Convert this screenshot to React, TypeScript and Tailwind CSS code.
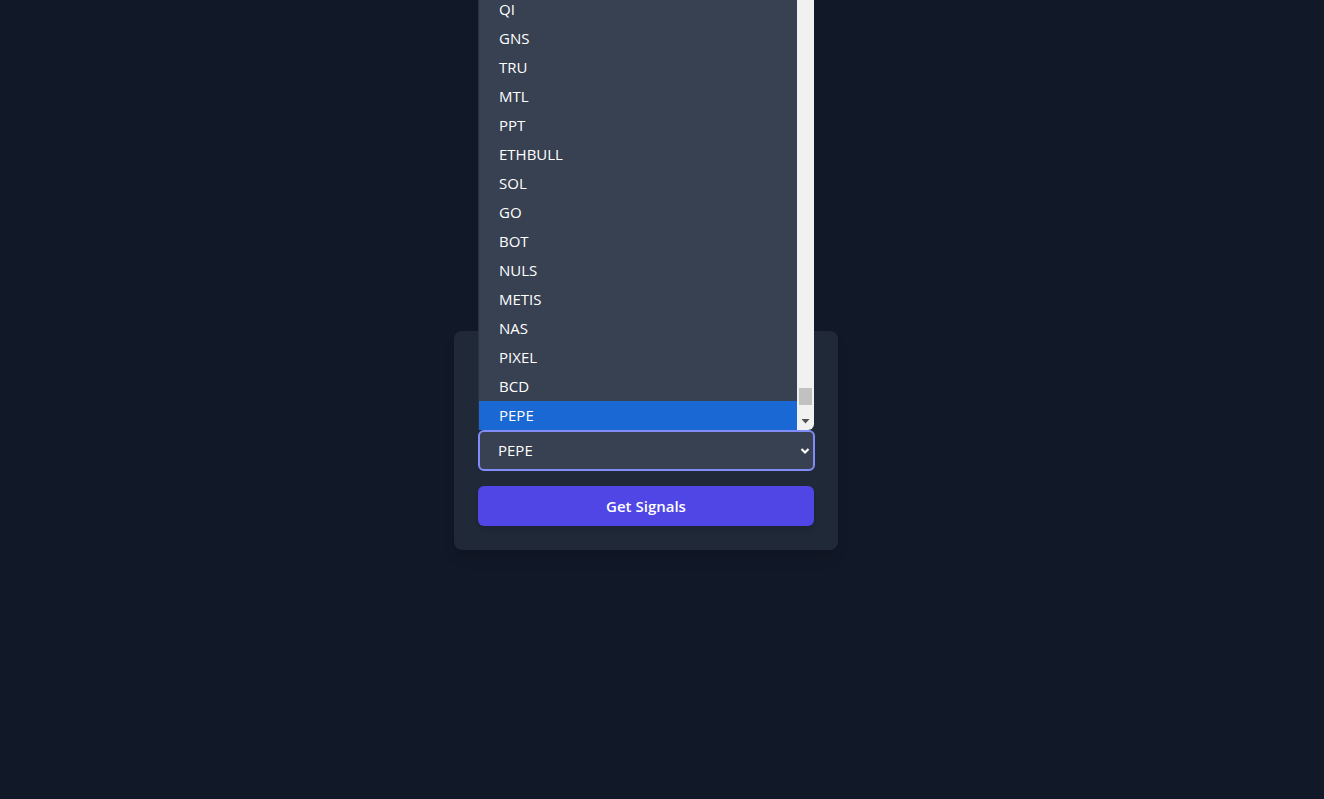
import React from "react";

const items = [
  "QI","GNS","TRU","MTL","PPT","ETHBULL","SOL","GO","BOT","NULS","METIS","NAS","PIXEL","BCD","PEPE",
];

export default function App() {
  return (
    <div className="relative min-h-screen bg-[#111827] overflow-hidden" style={{ fontFamily: '"Open Sans", "Noto Sans", sans-serif' }}>
      <div className="flex justify-center pr-8 pt-[331px]">
        <div className="flex w-96 flex-col rounded-lg bg-[#1f2937] p-6 shadow-lg">
          <div className="h-[75px]" />
          <div className="relative h-[41px]">
            <div className="flex h-[41px] w-[337px] items-center rounded-md border-2 border-[#818cf8] bg-[#374151] pl-[18px] text-[15px] text-white">
              PEPE
            </div>
            <svg className="absolute right-[4px] top-[17px]" width="10" height="8" viewBox="0 0 10 8">
              <path d="M1.5 2 L5 5.5 L8.5 2" fill="none" stroke="white" strokeWidth="2.2" />
            </svg>
          </div>
          <button className="mt-[15px] h-10 w-[336px] rounded-md bg-[#4f46e5] text-[15px] font-semibold text-white shadow-md">
            Get Signals
          </button>
        </div>
      </div>

      {/* native dropdown popup overlay */}
      <div className="absolute left-[478px] top-[-5px] flex w-[336px] overflow-hidden rounded-br-md border-l border-[#2a3240] bg-[#374151]">
        <div className="flex-1">
          {items.map((it) => (
            <div
              key={it}
              className={`flex h-[29px] items-center pl-[20px] text-[15px] text-white ${it === "PEPE" ? "bg-[#1a68d3]" : ""}`}
            >
              {it}
            </div>
          ))}
        </div>
        <div className="relative w-[17px] bg-[#f1f1f1]">
          <div className="absolute left-[2px] top-[393px] h-[17px] w-[13px] bg-[#c1c1c1]" />
          <svg className="absolute left-[4px] top-[424px]" width="9" height="5" viewBox="0 0 9 5">
            <path d="M0.5 0 L8.5 0 L4.5 4.5 Z" fill="#505050" />
          </svg>
        </div>
      </div>
    </div>
  );
}
